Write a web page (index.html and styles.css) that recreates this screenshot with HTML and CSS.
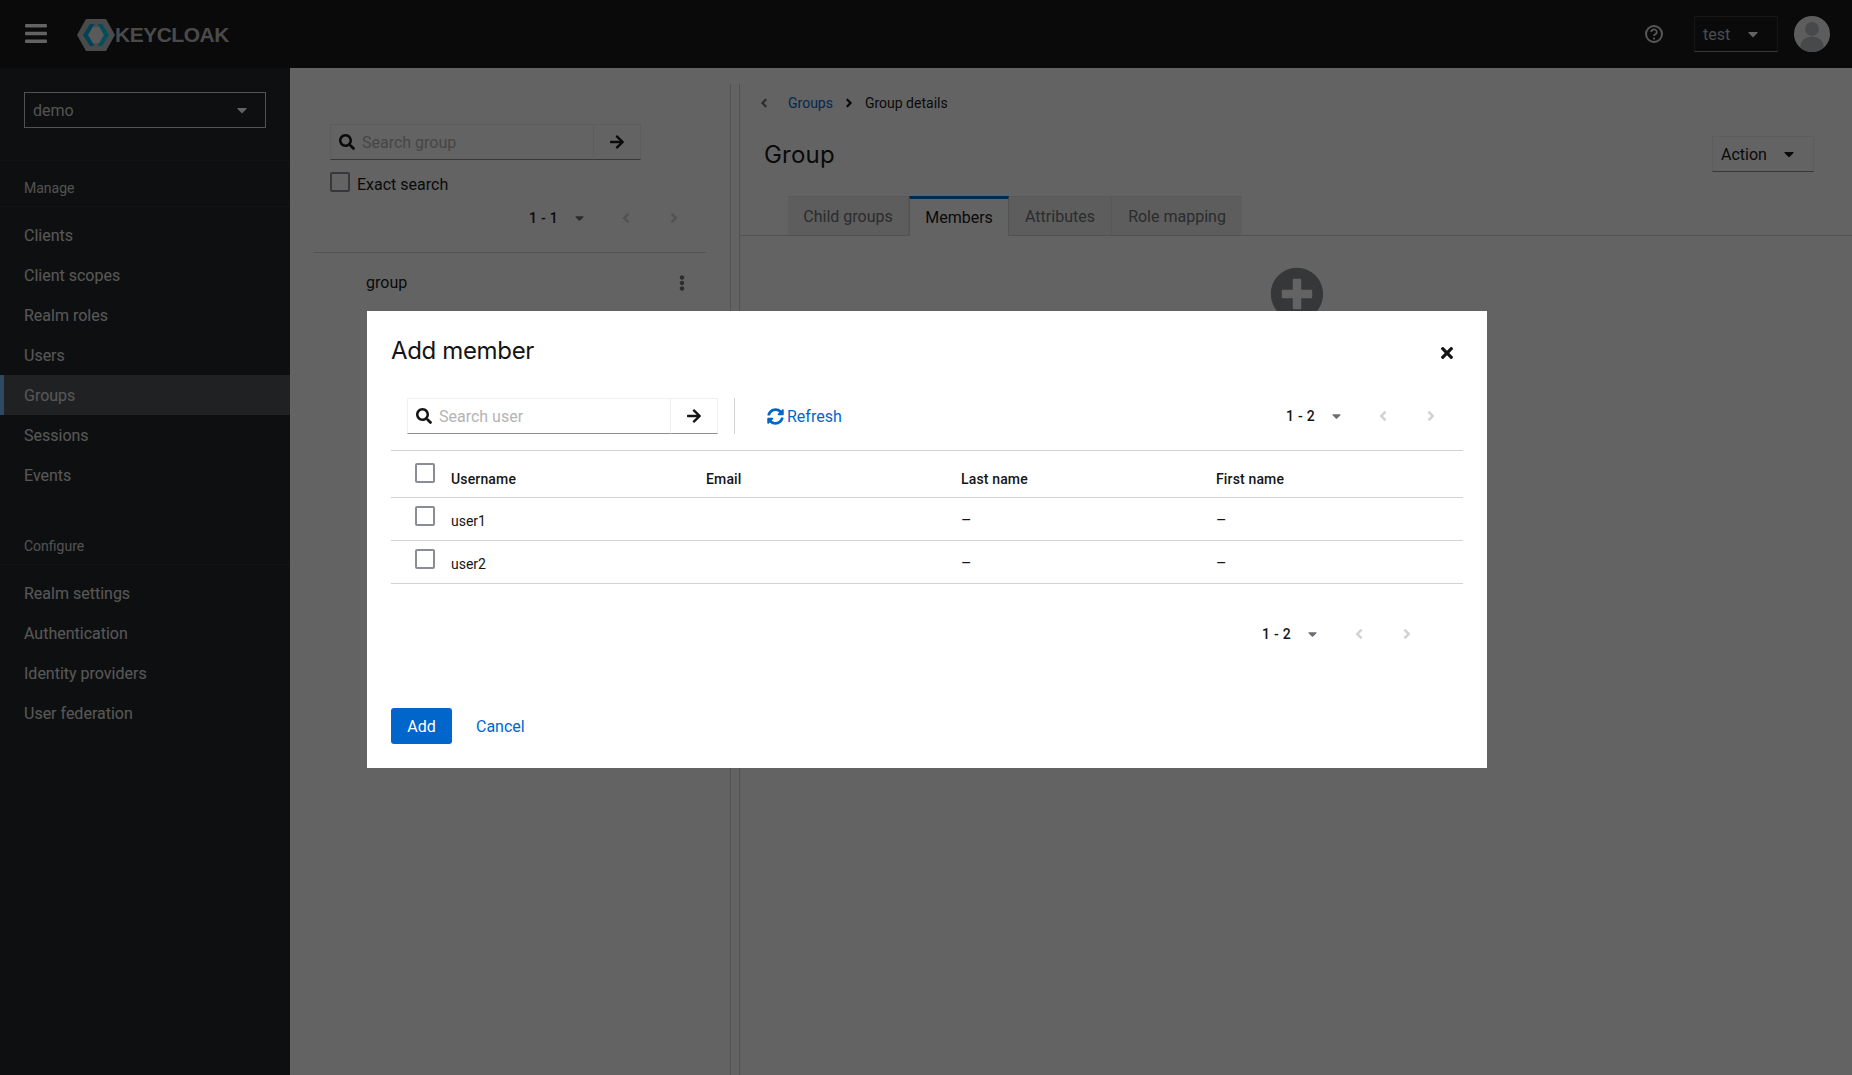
FILE: index.html
```html
<!DOCTYPE html>
<html lang="en">
<head>
<meta charset="utf-8">
<title>Keycloak - Add member</title>
<link rel="stylesheet" href="styles.css">
</head>
<body>
<svg class="sprite" aria-hidden="true">
  <symbol id="i-search" viewBox="0 0 512 512"><path d="M505 442.7L405.3 343c-4.5-4.5-10.6-7-17-7H372c27.6-35.3 44-79.7 44-128C416 93.1 322.9 0 208 0S0 93.1 0 208s93.1 208 208 208c48.3 0 92.7-16.4 128-44v16.3c0 6.4 2.5 12.5 7 17l99.7 99.7c9.4 9.4 24.6 9.4 33.9 0l28.3-28.3c9.4-9.4 9.4-24.6.1-34zM208 336c-70.7 0-128-57.2-128-128 0-70.7 57.2-128 128-128 70.7 0 128 57.2 128 128 0 70.7-57.2 128-128 128z"/></symbol>
  <symbol id="i-arrow" viewBox="0 0 448 512"><path d="M190.5 66.9l22.2-22.2c9.4-9.4 24.6-9.4 33.9 0L441 239c9.4 9.4 9.4 24.6 0 33.9L246.6 467.3c-9.4 9.4-24.6 9.4-33.9 0l-22.2-22.2c-9.5-9.5-9.3-25 .4-34.3L311.4 296H24c-13.3 0-24-10.7-24-24v-32c0-13.3 10.7-24 24-24h287.4L190.9 101.2c-9.8-9.3-10-24.8-.4-34.3z"/></symbol>
  <symbol id="i-sync" viewBox="0 0 512 512"><path d="M370.72 133.28C339.458 104.008 298.888 87.962 255.848 88c-77.458.068-144.328 53.178-162.791 126.85-1.344 5.363-6.122 9.15-11.651 9.15H24.103c-7.498 0-13.194-6.807-11.807-14.176C33.933 94.924 134.813 8 256 8c66.448 0 126.791 26.136 171.315 68.685L463.03 40.97C478.149 25.851 504 36.559 504 57.941V192c0 13.255-10.745 24-24 24H345.941c-21.382 0-32.09-25.851-16.971-40.971l41.75-41.749zM32 296h134.059c21.382 0 32.09 25.851 16.971 40.971l-41.75 41.75c31.262 29.273 71.835 45.319 114.876 45.28 77.418-.07 144.315-53.144 162.787-126.849 1.344-5.363 6.122-9.15 11.651-9.15h57.304c7.498 0 13.194 6.807 11.807 14.176C478.067 417.076 377.187 504 256 504c-66.448 0-126.791-26.136-171.315-68.685L48.97 471.03C33.851 486.149 8 475.441 8 454.059V320c0-13.255 10.745-24 24-24z"/></symbol>
  <symbol id="i-times" viewBox="0 0 352 512"><path d="M242.72 256l100.07-100.07c12.28-12.28 12.28-32.19 0-44.48l-22.24-22.24c-12.28-12.28-32.19-12.28-44.48 0L176 189.28 75.93 89.21c-12.28-12.28-32.19-12.28-44.48 0L9.21 111.45c-12.28 12.28-12.28 32.19 0 44.48L109.28 256 9.21 356.07c-12.28 12.28-12.28 32.19 0 44.48l22.24 22.24c12.28 12.28 32.2 12.28 44.48 0L176 322.72l100.07 100.07c12.28 12.28 32.2 12.28 44.48 0l22.24-22.24c12.28-12.28 12.28-32.19 0-44.48L242.72 256z"/></symbol>
  <symbol id="i-caret" viewBox="0 0 320 512"><path d="M31.3 192h257.3c17.8 0 26.7 21.5 14.1 34.1L174.1 354.8c-7.8 7.8-20.5 7.8-28.3 0L17.2 226.1C4.6 213.5 13.5 192 31.3 192z"/></symbol>
  <symbol id="i-left" viewBox="0 0 256 512"><path d="M31.7 239l136-136c9.4-9.4 24.6-9.4 33.9 0l22.6 22.6c9.4 9.4 9.4 24.6 0 33.9L127.9 256l96.4 96.4c9.4 9.4 9.4 24.6 0 33.9L201.7 409c-9.4 9.4-24.6 9.4-33.9 0l-136-136c-9.5-9.4-9.5-24.6-.1-34z"/></symbol>
  <symbol id="i-right" viewBox="0 0 256 512"><path d="M224.3 273l-136 136c-9.4 9.4-24.6 9.4-33.9 0l-22.6-22.6c-9.4-9.4-9.4-24.6 0-33.9l96.4-96.4-96.4-96.4c-9.4-9.4-9.4-24.6 0-33.9L54.3 103c9.4-9.4 24.6-9.4 33.9 0l136 136c9.5 9.4 9.5 24.6.1 34z"/></symbol>
  <symbol id="i-kebab" viewBox="0 0 192 512"><path d="M96 184c39.8 0 72 32.2 72 72s-32.2 72-72 72-72-32.2-72-72 32.2-72 72-72zM24 80c0 39.8 32.2 72 72 72s72-32.2 72-72S135.8 8 96 8 24 40.2 24 80zm0 352c0 39.8 32.2 72 72 72s72-32.2 72-72-32.2-72-72-72-72 32.2-72 72z"/></symbol>
  <symbol id="i-plus" viewBox="0 0 512 512"><path d="M256 8C119 8 8 119 8 256s111 248 248 248 248-111 248-248S393 8 256 8zm144 276c0 6.6-5.4 12-12 12h-92v92c0 6.6-5.4 12-12 12h-56c-6.6 0-12-5.4-12-12v-92h-92c-6.6 0-12-5.4-12-12v-56c0-6.6 5.4-12 12-12h92v-92c0-6.6 5.4-12 12-12h56c6.6 0 12 5.4 12 12v92h92c6.6 0 12 5.4 12 12v56z"/></symbol>
  <symbol id="i-bars" viewBox="0 0 448 512"><path d="M16 132h416c8.837 0 16-7.163 16-16V76c0-8.837-7.163-16-16-16H16C7.163 60 0 67.163 0 76v40c0 8.837 7.163 16 16 16zm0 160h416c8.837 0 16-7.163 16-16v-40c0-8.837-7.163-16-16-16H16c-8.837 0-16 7.163-16 16v40c0 8.837 7.163 16 16 16zm0 160h416c8.837 0 16-7.163 16-16v-40c0-8.837-7.163-16-16-16H16c-8.837 0-16 7.163-16 16v40c0 8.837 7.163 16 16 16z"/></symbol>
</svg>

<div class="app">
  <header class="topbar">
    <svg class="ic-bars"><use href="#i-bars"/></svg>
    <div class="brand">
      <svg class="brand-mark" viewBox="0 0 38 32">
        <path class="hex" d="M9 0H29L38 16 29 32H9L0 16Z"/>
        <path class="core" d="M14 8H24L28 16 24 24H14L10 16Z"/>
        <path class="chev-a" d="M13 5H17.500L11 16 17.500 27H13L6 16Z"/>
        <path class="chev-b" d="M20.500 5H25L32 16 25 27H20.500L27 16Z"/>
      </svg>
      <span class="brand-name">KEYCLOAK</span>
    </div>
    <div class="top-tools">
      <svg class="ic-help" viewBox="0 0 20 20">
        <circle cx="10" cy="10" r="8" fill="none" stroke="currentColor" stroke-width="2"/>
        <path d="M7.200 8a2.800 2.500 0 1 1 4.300 2.100c-1 .6-1.500 1-1.500 2" fill="none" stroke="currentColor" stroke-width="1.800"/>
        <circle cx="10" cy="14.600" r="1.100" fill="currentColor"/>
      </svg>
      <div class="user-select"><span>test</span><svg class="ic-caret"><use href="#i-caret"/></svg></div>
      <svg class="avatar" viewBox="0 0 36 36">
        <defs><clipPath id="av"><circle cx="18" cy="18" r="18"/></clipPath></defs>
        <circle cx="18" cy="18" r="18" fill="#f0f0f0"/>
        <g clip-path="url(#av)"><circle cx="18" cy="13" r="7" fill="#b8bbbe"/><ellipse cx="18" cy="30" rx="11.500" ry="9.500" fill="#b8bbbe"/></g>
      </svg>
    </div>
  </header>

  <div class="body-row">
    <aside class="sidebar">
      <div class="realm-wrap">
        <div class="realm-select"><span>demo</span><svg class="ic-caret"><use href="#i-caret"/></svg></div>
      </div>
      <div class="nav-title">Manage</div>
      <nav class="nav-list">
        <a class="nav-item">Clients</a>
        <a class="nav-item">Client scopes</a>
        <a class="nav-item">Realm roles</a>
        <a class="nav-item">Users</a>
        <a class="nav-item current">Groups</a>
        <a class="nav-item">Sessions</a>
        <a class="nav-item">Events</a>
      </nav>
      <div class="nav-title second">Configure</div>
      <nav class="nav-list">
        <a class="nav-item">Realm settings</a>
        <a class="nav-item">Authentication</a>
        <a class="nav-item">Identity providers</a>
        <a class="nav-item">User federation</a>
      </nav>
    </aside>

    <main class="main">
      <section class="tree-pane">
        <div class="search-group tree-search">
          <div class="search-input"><svg class="ic-search"><use href="#i-search"/></svg><span class="placeholder">Search group</span></div>
          <div class="search-go"><svg class="ic-arrow"><use href="#i-arrow"/></svg></div>
        </div>
        <label class="exact"><span class="check"></span><span class="exact-text">Exact search</span></label>
        <div class="pager tree-pager">
          <b class="pager-range">1 - 1</b><svg class="ic-caret-sm"><use href="#i-caret"/></svg>
          <span class="pager-btn"><svg class="ic-angle"><use href="#i-left"/></svg></span>
          <span class="pager-btn"><svg class="ic-angle"><use href="#i-right"/></svg></span>
        </div>
        <div class="tree-item"><span>group</span><svg class="ic-kebab"><use href="#i-kebab"/></svg></div>
      </section>

      <section class="detail-pane">
        <div class="crumbs">
          <svg class="ic-crumb back"><use href="#i-left"/></svg>
          <a class="crumb-link">Groups</a>
          <svg class="ic-crumb sep"><use href="#i-right"/></svg>
          <span>Group details</span>
        </div>
        <div class="title-row">
          <h1 class="page-title">Group</h1>
          <div class="action-btn"><span>Action</span><svg class="ic-caret"><use href="#i-caret"/></svg></div>
        </div>
        <div class="tabs">
          <span class="tab tab-child">Child groups</span>
          <span class="tab tab-members active">Members</span>
          <span class="tab tab-attr">Attributes</span>
          <span class="tab tab-role">Role mapping</span>
        </div>
        <div class="empty"><svg class="ic-plus"><use href="#i-plus"/></svg></div>
      </section>
    </main>
  </div>
</div>

<div class="backdrop">
  <div class="modal">
    <div class="modal-head">
      <h2 class="modal-title">Add member</h2>
      <svg class="ic-close"><use href="#i-times"/></svg>
    </div>
    <div class="toolbar">
      <div class="search-group modal-search">
        <div class="search-input"><svg class="ic-search"><use href="#i-search"/></svg><span class="placeholder">Search user</span></div>
        <div class="search-go"><svg class="ic-arrow"><use href="#i-arrow"/></svg></div>
      </div>
      <span class="tool-sep"></span>
      <a class="refresh"><svg class="ic-sync"><use href="#i-sync"/></svg>Refresh</a>
      <div class="pager top-pager">
        <b class="pager-range">1 - 2</b><svg class="ic-caret-sm"><use href="#i-caret"/></svg>
        <span class="pager-btn"><svg class="ic-angle"><use href="#i-left"/></svg></span>
        <span class="pager-btn"><svg class="ic-angle"><use href="#i-right"/></svg></span>
      </div>
    </div>
    <table class="users">
      <colgroup><col class="c-check"><col class="c-data"><col class="c-data"><col class="c-data"><col></colgroup>
      <thead>
        <tr><th class="cell-check"><span class="check"></span></th><th>Username</th><th>Email</th><th>Last name</th><th>First name</th></tr>
      </thead>
      <tbody>
        <tr><td class="cell-check"><span class="check"></span></td><td>user1</td><td></td><td class="dash">–</td><td class="dash">–</td></tr>
        <tr><td class="cell-check"><span class="check"></span></td><td>user2</td><td></td><td class="dash">–</td><td class="dash">–</td></tr>
      </tbody>
    </table>
    <div class="pager bottom-pager">
      <b class="pager-range">1 - 2</b><svg class="ic-caret-sm"><use href="#i-caret"/></svg>
      <span class="pager-btn"><svg class="ic-angle"><use href="#i-left"/></svg></span>
      <span class="pager-btn"><svg class="ic-angle"><use href="#i-right"/></svg></span>
    </div>
    <div class="modal-foot">
      <button class="btn-primary">Add</button>
      <a class="btn-link">Cancel</a>
    </div>
  </div>
</div>
</body>
</html>
```

FILE: styles.css
```css
* { box-sizing: border-box; }
html, body { margin: 0; height: 100%; }
body {
  font-family: Roboto, "Liberation Sans", sans-serif;
  font-size: 16px;
  color: #151515;
  background: #fff;
  overflow: hidden;
}
.sprite { display: none; }
svg { fill: currentColor; display: block; flex: none; }
h1, h2 { margin: 0; font-weight: 400; font-family: Inter, Roboto, sans-serif; }

.app { display: flex; flex-direction: column; height: 1075px; }

/* top bar */
.topbar {
  height: 68px;
  flex: none;
  display: flex;
  align-items: center;
  background: #151515;
  color: #fff;
  padding-left: 25px;
}
.ic-bars { width: 22px; height: 25px; margin-top: -1px; }
.brand { display: flex; align-items: center; margin-left: 30px; margin-top: 2px; }
.brand-mark { width: 38px; height: 32px; }
.hex { fill: #bdbdbd; }
.core { fill: #e6e6e6; }
.chev-a { fill: #00a8d8; }
.chev-b { fill: #00c8ee; }
.brand-name {
  font-family: "Liberation Sans", sans-serif;
  font-weight: 700;
  font-size: 21px;
  letter-spacing: -0.5px;
  color: #bdbdbd;
  line-height: 1;
  margin-top: -2px;
}
.top-tools { margin-left: auto; display: flex; align-items: center; padding-right: 22px; }
.ic-help { width: 20px; height: 20px; color: #e0e0e0; margin-right: 30px; }
.user-select {
  width: 84px;
  height: 36px;
  display: flex;
  align-items: center;
  justify-content: space-between;
  padding: 0 19px 0 8px;
  border: 1px solid #36393c;
  border-bottom-color: #8a8d90;
  color: #b8c4cc;
  margin-right: 16px;
}
.user-select .ic-caret { color: #fff; }
.ic-caret { width: 10px; height: 16px; }
.avatar { width: 36px; height: 36px; }

.body-row { flex: 1; display: flex; min-height: 0; }

/* sidebar */
.sidebar { width: 290px; flex: none; background: #212427; color: #d2d2d2; }
.realm-wrap { padding: 24px 24px 32px; border-bottom: 1px solid #2e3135; }
.realm-select {
  height: 36px;
  width: 242px;
  border: 1px solid #d2d2d2;
  display: flex;
  align-items: center;
  justify-content: space-between;
  padding: 0 18px 0 8px;
  color: #d2d2d2;
}
.realm-select .ic-caret { color: #fff; }
.nav-title {
  font-size: 14px;
  color: #d2d2d2;
  padding: 8px 24px 0;
  border-bottom: 1px solid #2e3135;
  height: 46px;
  display: flex;
  align-items: center;
}
.nav-title.second { margin-top: 24px; }
.nav-list { display: flex; flex-direction: column; padding-top: 8px; }
.nav-item {
  height: 40px;
  display: flex;
  align-items: center;
  padding-left: 24px;
  color: #e0e0e0;
}
.nav-item.current {
  background: #4f5255;
  box-shadow: inset 4px 0 0 #73bcf7;
}

/* main */
.main { flex: 1; display: flex; padding-top: 16px; background: #fff; min-width: 0; }
.tree-pane { width: 441px; flex: none; border-right: 1px solid #d2d2d2; display: flex; flex-direction: column; }
.detail-pane { flex: 1; margin-left: 8px; border-left: 1px solid #d2d2d2; min-width: 0; padding-top: 9px; }

.search-group { display: flex; height: 36px; }
.search-input {
  flex: 1;
  display: flex;
  align-items: center;
  padding-left: 8px;
  border: 1px solid #f0f0f0;
  border-bottom-color: #8a8d90;
}
.ic-search { width: 16px; height: 16px; margin-right: 7px; color: #151515; }
.placeholder { color: #b4b4b4; line-height: 1; padding-top: 1px; }
.search-go {
  width: 47px;
  display: flex;
  align-items: center;
  justify-content: center;
  border: 1px solid #f0f0f0;
  border-left: 0;
  border-bottom-color: #8a8d90;
}
.ic-arrow { width: 14px; height: 16px; color: #151515; }
.tree-search { width: 311px; margin: 40px 0 0 40px; }
.check {
  width: 20px;
  height: 20px;
  border: 2px solid #8a8d96;
  border-radius: 2px;
  background: #fff;
  display: block;
  flex: none;
}
.exact { display: flex; align-items: center; gap: 7px; margin: 12px 0 0 40px; height: 20px; }
.exact-text { padding-top: 5px; }

.pager { display: flex; align-items: center; font-size: 14px; }
.pager-range { font-weight: 500; width: 29px; white-space: nowrap; letter-spacing: 0.3px; text-align: right; }
.ic-caret-sm { width: 9px; height: 14px; color: #6a6e73; margin-left: 17px; margin-right: 18px; }
.pager-btn { width: 48px; display: flex; justify-content: center; color: #d2d2d2; }
.ic-angle { width: 8px; height: 16px; }
.tree-pager { justify-content: flex-end; margin: 16px 32px 0 0; height: 20px; }
.tree-item {
  margin: 24px 24px 0;
  border-top: 1px solid #d2d2d2;
  height: 60px;
  display: flex;
  align-items: center;
  justify-content: space-between;
  padding: 0 21px 0 52px;
}
.ic-kebab { width: 6px; height: 16px; color: #6a6e73; }

.crumbs { display: flex; align-items: center; font-size: 14px; height: 20px; color: #151515; padding-left: 20px; }
.ic-crumb { width: 8px; height: 14px; }
.ic-crumb.back { color: #6a6e73; margin-right: 20px; }
.ic-crumb.sep { color: #151515; margin: 0 12px 0 12px; }
.crumb-link { color: #0066cc; }
.title-row { display: flex; align-items: center; justify-content: space-between; padding: 0 38px 0 24px; margin-top: 23px; height: 36px; }
.page-title { font-size: 24px; line-height: 36px; letter-spacing: 0.2px; padding-top: 1px; }
.action-btn {
  width: 102px;
  height: 36px;
  display: flex;
  align-items: center;
  justify-content: space-between;
  padding: 0 19px 0 8px;
  border: 1px solid #f0f0f0;
  border-bottom-color: #8a8d90;
}
.tabs {
  display: flex;
  margin-top: 24px;
  padding-left: 48px;
  height: 40px;
  border-bottom: 1px solid #d2d2d2;
}
.tab {
  display: flex;
  align-items: center;
  justify-content: center;
  height: 39px;
  background: #f0f0f0;
  color: #6a6e73;
  border-top: 1px solid #e4e4e4;
  border-right: 1px solid #e0e0e0;
}
.tab-child { width: 121px; }
.tab-members { width: 100px; }
.tab-attr { width: 103px; }
.tab-role { width: 130px; border-right: 0; }
.tab.active {
  background: #fff;
  color: #151515;
  border-top: 3px solid #0066cc;
  border-left: 1px solid #d2d2d2;
  border-right: 1px solid #d2d2d2;
  height: 40px;
  padding-bottom: 1px;
}
.empty { display: flex; justify-content: center; padding-top: 31px; }
.ic-plus { width: 54px; height: 54px; color: #8a8d90; margin-left: 1px; }

/* modal */
.backdrop {
  position: fixed;
  inset: 0;
  background: rgba(3, 3, 3, 0.62);
  display: flex;
  align-items: center;
  justify-content: center;
}
.modal {
  width: 1120px;
  height: 457px;
  margin: 4px 0 0 2px;
  background: #fff;
  padding: 0 24px;
  display: flex;
  flex-direction: column;
}
.modal-head { display: flex; align-items: center; justify-content: space-between; height: 36px; margin-top: 22px; padding-right: 10px; }
.modal-title { font-size: 24px; color: #151515; line-height: 36px; letter-spacing: -0.35px; }
.ic-close { width: 12px; height: 20px; color: #151515; margin-top: 3px; }
.toolbar { display: flex; align-items: center; height: 36px; margin-top: 29px; padding-left: 16px; }
.modal-search { width: 311px; height: 36px; }
.tool-sep { width: 1px; height: 36px; background: #d2d2d2; margin-left: 16px; }
.refresh { display: flex; align-items: center; color: #0066cc; margin-left: 32px; gap: 3px; }
.ic-sync { width: 17px; height: 17px; }
.top-pager { margin-left: auto; margin-right: 8px; }
.users { width: 1072px; border-collapse: collapse; table-layout: fixed; margin-top: 16px; font-size: 14px; border-top: 1px solid #d2d2d2; }
.c-check { width: 60px; }
.c-data { width: 255px; }
.users th { text-align: left; font-weight: 500; height: 47px; padding: 10px 0 0; border-bottom: 1px solid #d2d2d2; letter-spacing: 0.15px; }
.users td { height: 43px; padding: 4px 0 0; border-bottom: 1px solid #d2d2d2; }
.users td.dash { font-size: 16px; line-height: 16px; }
.users th.cell-check { padding: 0 0 2px 24px; }
.users td.cell-check { padding: 0 0 6px 24px; }
.bottom-pager { justify-content: flex-end; margin: 40px 32px 0 0; height: 20px; }
.modal-foot { display: flex; align-items: center; margin-top: 64px; }
.btn-primary {
  width: 61px;
  height: 36px;
  background: #0066cc;
  color: #fff;
  border: 0;
  border-radius: 3px;
  font: inherit;
  padding: 0;
}
.btn-link { color: #0066cc; margin-left: 24px; }
```
